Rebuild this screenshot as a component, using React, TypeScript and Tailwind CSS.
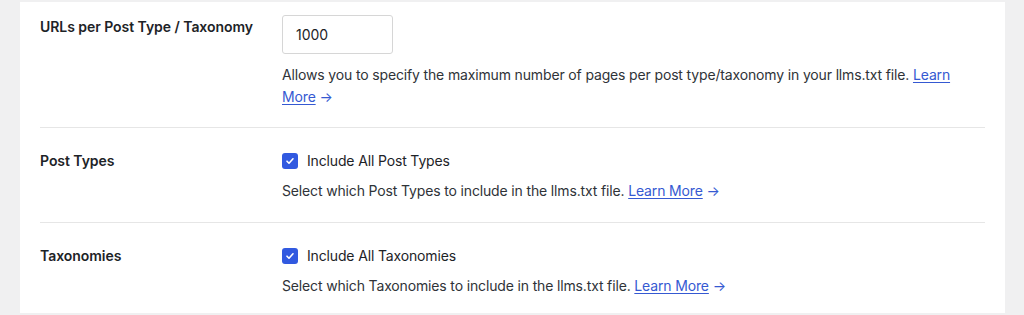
import React from "react";

const Check = () => (
  <span className="inline-flex h-4 w-4 items-center justify-center rounded-[3px] bg-[#3159e0]">
    <svg width="10" height="10" viewBox="0 0 10 10" fill="none">
      <path d="M2 5.2l2 2 4-4.4" stroke="white" strokeWidth="1.6" strokeLinecap="round" strokeLinejoin="round" />
    </svg>
  </span>
);

const LearnMore = ({ children }: { children: React.ReactNode }) => (
  <>
    <a className="text-[#3559d2] underline underline-offset-2 decoration-1">{children}</a>
    <span className="text-[#3559d2]"> →</span>
  </>
);

export default function App() {
  return (
    <div className="w-[1024px] h-[315px] bg-[#f0f0f1] pl-[20px] pr-[19px] pt-[2px] pb-[2px] font-['Inter',sans-serif] text-[14px] text-[#1d2327]">
      <div className="h-full bg-white px-5">
        <div className="grid grid-cols-[242px_1fr] border-b border-[#e6e6e6] pt-[13px] pb-[19px]">
          <div className="font-semibold leading-5 pt-[2px] tracking-[-0.05px]">URLs per Post Type / Taxonomy</div>
          <div>
            <div className="flex h-[39px] w-[111px] items-center rounded-[3px] border border-[#d6d6d6] px-[13px]">1000</div>
            <p className="mt-[10px] leading-[22px] text-[#2f3338] tracking-[-0.15px]">
              Allows you to specify the maximum number of pages per post type/taxonomy in your llms.txt file.{" "}
              <LearnMore>Learn More</LearnMore>
            </p>
          </div>
        </div>
        <div className="grid grid-cols-[242px_1fr] border-b border-[#e6e6e6] pt-[23px] pb-[20px]">
          <div className="font-semibold leading-5 tracking-[-0.05px]">Post Types</div>
          <div>
            <label className="flex items-center gap-[9px] leading-5 tracking-[-0.15px]">
              <Check />
              <span>Include All Post Types</span>
            </label>
            <p className="mt-[9px] leading-[22px] text-[#2f3338] tracking-[-0.15px]">
              Select which Post Types to include in the llms.txt file. <LearnMore>Learn More</LearnMore>
            </p>
          </div>
        </div>
        <div className="grid grid-cols-[242px_1fr] pt-[23px]">
          <div className="font-semibold leading-5 tracking-[-0.05px]">Taxonomies</div>
          <div>
            <label className="flex items-center gap-[9px] leading-5 tracking-[-0.15px]">
              <Check />
              <span>Include All Taxonomies</span>
            </label>
            <p className="mt-[9px] leading-[22px] text-[#2f3338] tracking-[-0.15px]">
              Select which Taxonomies to include in the llms.txt file. <LearnMore>Learn More</LearnMore>
            </p>
          </div>
        </div>
      </div>
    </div>
  );
}
